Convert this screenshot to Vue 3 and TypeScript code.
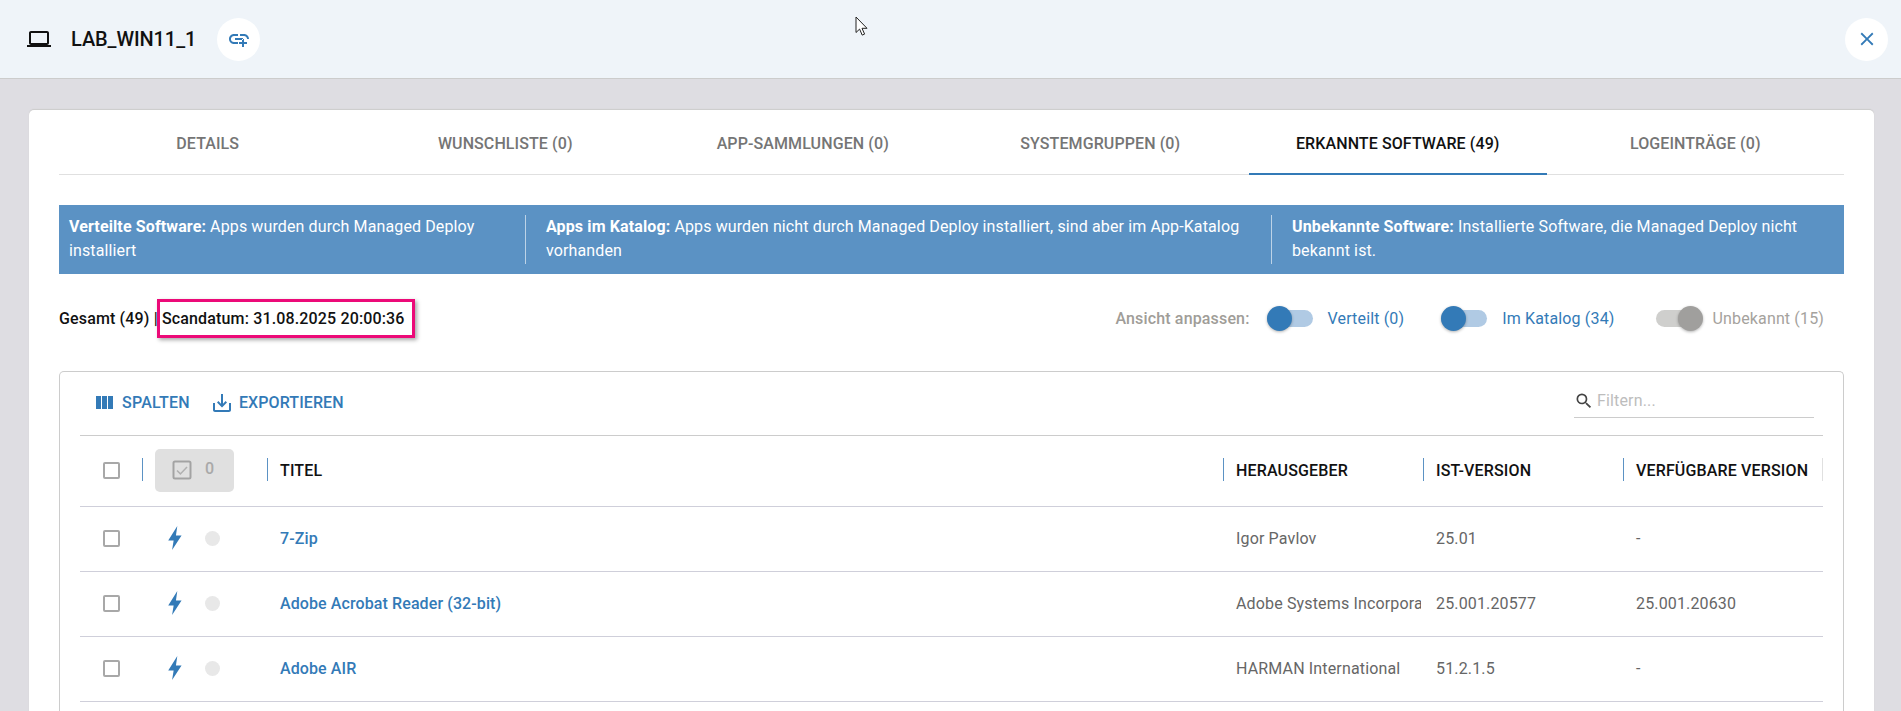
<script setup lang="ts">
interface Row { title: string; publisher: string; version: string; available: string }
const tabs = ['Details', 'Wunschliste (0)', 'App-Sammlungen (0)', 'Systemgruppen (0)', 'Erkannte Software (49)', 'Logeinträge (0)']
const rows: Row[] = [
  { title: '7-Zip', publisher: 'Igor Pavlov', version: '25.01', available: '-' },
  { title: 'Adobe Acrobat Reader (32-bit)', publisher: 'Adobe Systems Incorporated', version: '25.001.20577', available: '25.001.20630' },
  { title: 'Adobe AIR', publisher: 'HARMAN International', version: '51.2.1.5', available: '-' },
]
</script>

<template>
  <div class="page">
    <header class="top">
      <svg class="laptop" width="24" height="24" viewBox="0 0 24 24"><path d="M20 18c1.1 0 1.99-.9 1.99-2L22 6c0-1.1-.9-2-2-2H4c-1.1 0-2 .9-2 2v10c0 1.1.9 2 2 2H0v2h24v-2h-4zM4 6h16v10H4V6z" /></svg>
      <span class="name">LAB_WIN11_1</span>
      <button class="round link">
        <svg width="24" height="24" viewBox="0 0 24 24"><path d="M8 11h8v2H8zm12.1 1H22c0-2.76-2.24-5-5-5h-4v1.9h4c1.71 0 3.1 1.39 3.1 3.1zM3.9 12c0-1.71 1.39-3.1 3.1-3.1h4V7H7c-2.76 0-5 2.24-5 5s2.24 5 5 5h4v-1.9H7c-1.71 0-3.1-1.39-3.1-3.1zM17 12h-2v3h-3v2h3v3h2v-3h3v-2h-3z" /></svg>
      </button>
      <button class="round close">
        <svg width="22" height="22" viewBox="0 0 24 24"><path d="M19 6.41 17.59 5 12 10.59 6.41 5 5 6.41 10.59 12 5 17.59 6.41 19 12 13.41 17.59 19 19 17.59 13.41 12z" /></svg>
      </button>
    </header>

    <main class="card">
      <nav class="tabs">
        <div v-for="(t, i) in tabs" :key="t" class="tab" :class="{ active: i === 4 }">{{ t }}</div>
      </nav>

      <section class="banner">
        <p><b>Verteilte Software:</b> Apps wurden durch Managed Deploy installiert</p>
        <p><b>Apps im Katalog:</b> Apps wurden nicht durch Managed Deploy installiert, sind aber im App-Katalog vorhanden</p>
        <p><b>Unbekannte Software:</b> Installierte Software, die Managed Deploy nicht bekannt ist.</p>
      </section>

      <section class="summary">
        <div class="totals">
          Gesamt (49) | Scandatum: 31.08.2025 20:00:36
          <span class="mark"></span>
        </div>
        <div class="view">
          <span class="view-label">Ansicht anpassen:</span>
          <span class="sw"><i class="track"><i class="thumb"></i></i></span><span class="sw-text t1">Verteilt (0)</span>
          <span class="sw s2"><i class="track"><i class="thumb"></i></i></span><span class="sw-text t2">Im Katalog (34)</span>
          <span class="sw off"><i class="track"><i class="thumb"></i></i></span><span class="sw-text t3">Unbekannt (15)</span>
        </div>
      </section>

      <section class="panel">
        <div class="toolbar">
          <button class="tool first">
            <svg width="24" height="24" viewBox="0 0 24 24"><path d="M10 18h5V5h-5v13zm-6 0h5V5H4v13zM16 5v13h5V5h-5z" /></svg>
            Spalten
          </button>
          <button class="tool second">
            <svg width="24" height="24" viewBox="0 0 24 24"><path d="M19 12v7H5v-7H3v7c0 1.1.9 2 2 2h14c1.1 0 2-.9 2-2v-7h-2zm-6 .67l2.59-2.58L17 11.5l-5 5-5-5 1.41-1.41L11 12.67V3h2z" /></svg>
            Exportieren
          </button>
          <label class="filter">
            <svg width="20" height="20" viewBox="0 0 24 24"><path d="M15.5 14h-.79l-.28-.27A6.471 6.471 0 0 0 16 9.5 6.5 6.5 0 1 0 9.5 16c1.61 0 3.09-.59 4.23-1.57l.27.28v.79l5 4.99L20.49 19l-4.99-5zm-6 0C7.01 14 5 11.99 5 9.5S7.01 5 9.5 5 14 7.01 14 9.5 11.99 14 9.5 14z" /></svg>
            <span>Filtern...</span>
          </label>
        </div>

        <div class="grid head">
          <div class="c-check"><span class="box"></span></div>
          <div class="c-state sep">
            <div class="chip">
              <svg width="24" height="24" viewBox="0 0 24 24"><rect x="3.5" y="3.5" width="17" height="17" rx="1.5" fill="none" stroke="#a3a3a3" stroke-width="2" /><path d="M7 12.5l3.4 3.4L17 9" fill="none" stroke="#b0b0b0" stroke-width="1.5" /></svg>
              <span>0</span>
            </div>
          </div>
          <div class="c sep">Titel</div>
          <div class="c sep">Herausgeber</div>
          <div class="c sep">Ist-Version</div>
          <div class="c sep last">Verfügbare Version</div>
        </div>

        <div v-for="r in rows" :key="r.title" class="grid row">
          <div class="c-check"><span class="box"></span></div>
          <div class="c-state">
            <svg class="bolt" width="14" height="24" viewBox="0 0 13 23"><path d="M8.7 0 0 14h5.2L3.7 23 12.8 9H7.4L8.7 0z" /></svg>
            <span class="dot"></span>
          </div>
          <div class="c title">{{ r.title }}</div>
          <div class="c text">{{ r.publisher }}</div>
          <div class="c text">{{ r.version }}</div>
          <div class="c text">{{ r.available }}</div>
        </div>
      </section>
    </main>

    <svg class="cursor" width="14" height="21" viewBox="0 0 14 21"><path d="M1 1v15.5l3.6-3.4 2.6 6 2.4-1-2.6-5.8h5L1 1z" fill="#fff" stroke="#222" stroke-width="1" /></svg>
  </div>
</template>

<style>
html, body { margin: 0; height: 711px; overflow: hidden; }
</style>

<style scoped>
.page {
  position: relative;
  height: 711px;
  overflow: hidden;
  background: #dedde2;
  font-family: Roboto, "Liberation Sans", sans-serif;
  font-size: 16px;
  letter-spacing: .15px;
  color: #111;
}
.top {
  display: flex;
  align-items: center;
  height: 78px;
  padding: 0 13px 0 27px;
  background: #eff4f9;
  border-bottom: 1px solid #ccc;
}
.laptop { fill: #111; }
.name { margin-left: 20px; font-size: 20px; font-weight: 500; letter-spacing: -.1px; }
.round {
  width: 43px;
  height: 43px;
  padding: 0;
  border: 0;
  border-radius: 50%;
  background: #fff;
  display: flex;
  align-items: center;
  justify-content: center;
}
.round svg { fill: #337ab7; }
.link { margin-left: 21px; }
.close { margin-left: auto; }

.card {
  margin: 31px 27px 0 29px;
  padding: 0 30px;
  height: 640px;
  background: #fff;
  border-radius: 5px 5px 0 0;
  box-shadow: 0 -1px 1px #ccc;
}
.tabs { display: grid; grid-template-columns: repeat(6, 1fr); height: 64px; border-bottom: 1px solid #e0e0e0; }
.tab {
  display: flex;
  align-items: center;
  justify-content: center;
  padding-top: 2px;
  text-transform: uppercase;
  font-weight: 500;
  letter-spacing: .1px;
  color: #757575;
}
.tab.active { color: #111; box-shadow: inset 0 -2px 0 #337ab7; margin-bottom: -1px; }

.banner {
  display: grid;
  grid-template-columns: 466px 746px 1fr;
  margin-top: 30px;
  height: 69px;
  background: #5b92c4;
  color: #fff;
  align-items: center;
  letter-spacing: .12px;
}
.banner p {
  margin: 0;
  padding: 0 20px;
  line-height: 24px;
  height: 49px;
  border-left: 1px solid rgba(255,255,255,.6);
}
.banner p:first-child { border-left: 0; padding-left: 10px; }
.banner b { font-weight: 700; }

.summary { display: flex; align-items: center; justify-content: space-between; height: 97px; box-sizing: border-box; padding-bottom: 9px; }
.totals { position: relative; font-weight: 500; }
.mark {
  position: absolute;
  left: 98px;
  top: -10px;
  width: 252px;
  height: 33px;
  border: 3px solid #ec0a78;
  box-shadow: 2px 2px 4px rgba(0,0,0,.35);
}
.view { display: flex; align-items: center; margin-right: 20px; }
.view-label { font-weight: 500; color: #a09d98; margin-right: 17px; }
.sw { display: block; width: 46px; }
.track { position: relative; display: block; width: 46px; height: 17px; border-radius: 9px; background: #b0cae4; }
.thumb { position: absolute; top: -4px; left: 0; width: 25px; height: 25px; border-radius: 50%; background: #337ab7; box-shadow: 0 1px 3px rgba(0,0,0,.3); }
.sw-text { color: #337ab7; }
.t1 { margin-left: 15px; margin-right: 37px; }
.t2 { margin-left: 15px; margin-right: 41px; }
.t3 { margin-left: 11px; color: #a5a29d; }
.off .track { background: #cfcfcd; }
.off .thumb { left: 22px; background: #a09f9d; }

.panel {
  height: 340px;
  border: 1px solid #ccc;
  border-bottom: 0;
  border-radius: 5px 5px 0 0;
  padding: 0 20px 0 20px;
}
.toolbar { display: flex; align-items: center; height: 63px; border-bottom: 1px solid #ccc; }
.tool {
  display: flex;
  align-items: center;
  gap: 6px;
  padding: 0 0 2px;
  border: 0;
  background: none;
  color: #337ab7;
  font: 500 16px Roboto, sans-serif;
  letter-spacing: .25px;
  text-transform: uppercase;
  margin-left: 20px;
}
.tool.first { margin-left: 12px; }
.tool.second { gap: 5px; letter-spacing: .1px; }
.tool svg { fill: #337ab7; }
.filter {
  align-self: flex-start;
  margin: 10px 9px 0 auto;
  width: 240px;
  height: 36px;
  padding-top: 2px;
  box-sizing: border-box;
  display: flex;
  align-items: center;
  gap: 3px;
  border-bottom: 1px solid #ccc;
  color: #bdbdbd;
}
.filter svg { fill: #444; }

.grid { display: grid; grid-template-columns: 62px 125px 1fr 200px 200px 200px; align-items: center; border-bottom: 1px solid #cfcfda; padding-bottom: 2px; }
.head { height: 68px; font-weight: 500; text-transform: uppercase; }
.row { height: 62px; }
.c-check { padding-left: 23px; display: flex; }
.box { width: 13px; height: 13px; border: 2px solid #a8a8a8; border-radius: 2px; }
.c-state { display: flex; align-items: center; height: 100%; position: relative; }
.sep::before { content: ""; position: absolute; left: 0; top: 50%; margin-top: -12px; height: 23px; width: 1px; background: #5b92c4; }
.c { position: relative; padding-left: 13px; overflow: hidden; white-space: nowrap; }
.sep { position: relative; }
.head .c { height: 100%; display: flex; align-items: center; }
.last::after { content: ""; position: absolute; right: 0; top: 50%; margin-top: -12px; height: 23px; width: 1px; background: #e0e0e0; }
.chip {
  margin-left: 13px;
  width: 79px;
  height: 43px;
  background: #e0e0e0;
  border-radius: 5px;
  display: flex;
  align-items: center;
  padding-left: 15px;
  box-sizing: border-box;
  color: #a9a9a9;
  font-weight: 500;
}
.chip span { margin-left: 11px; margin-top: -3px; }
.title { color: #337ab7; font-weight: 500; letter-spacing: .1px; }
.text { color: #666; margin-right: 2px; }
.bolt { fill: #337ab7; margin-left: 26px; }
.dot { width: 15px; height: 15px; border-radius: 50%; background: #e8e8e8; margin-left: 23px; }

.cursor { position: absolute; left: 855px; top: 16px; }
</style>
